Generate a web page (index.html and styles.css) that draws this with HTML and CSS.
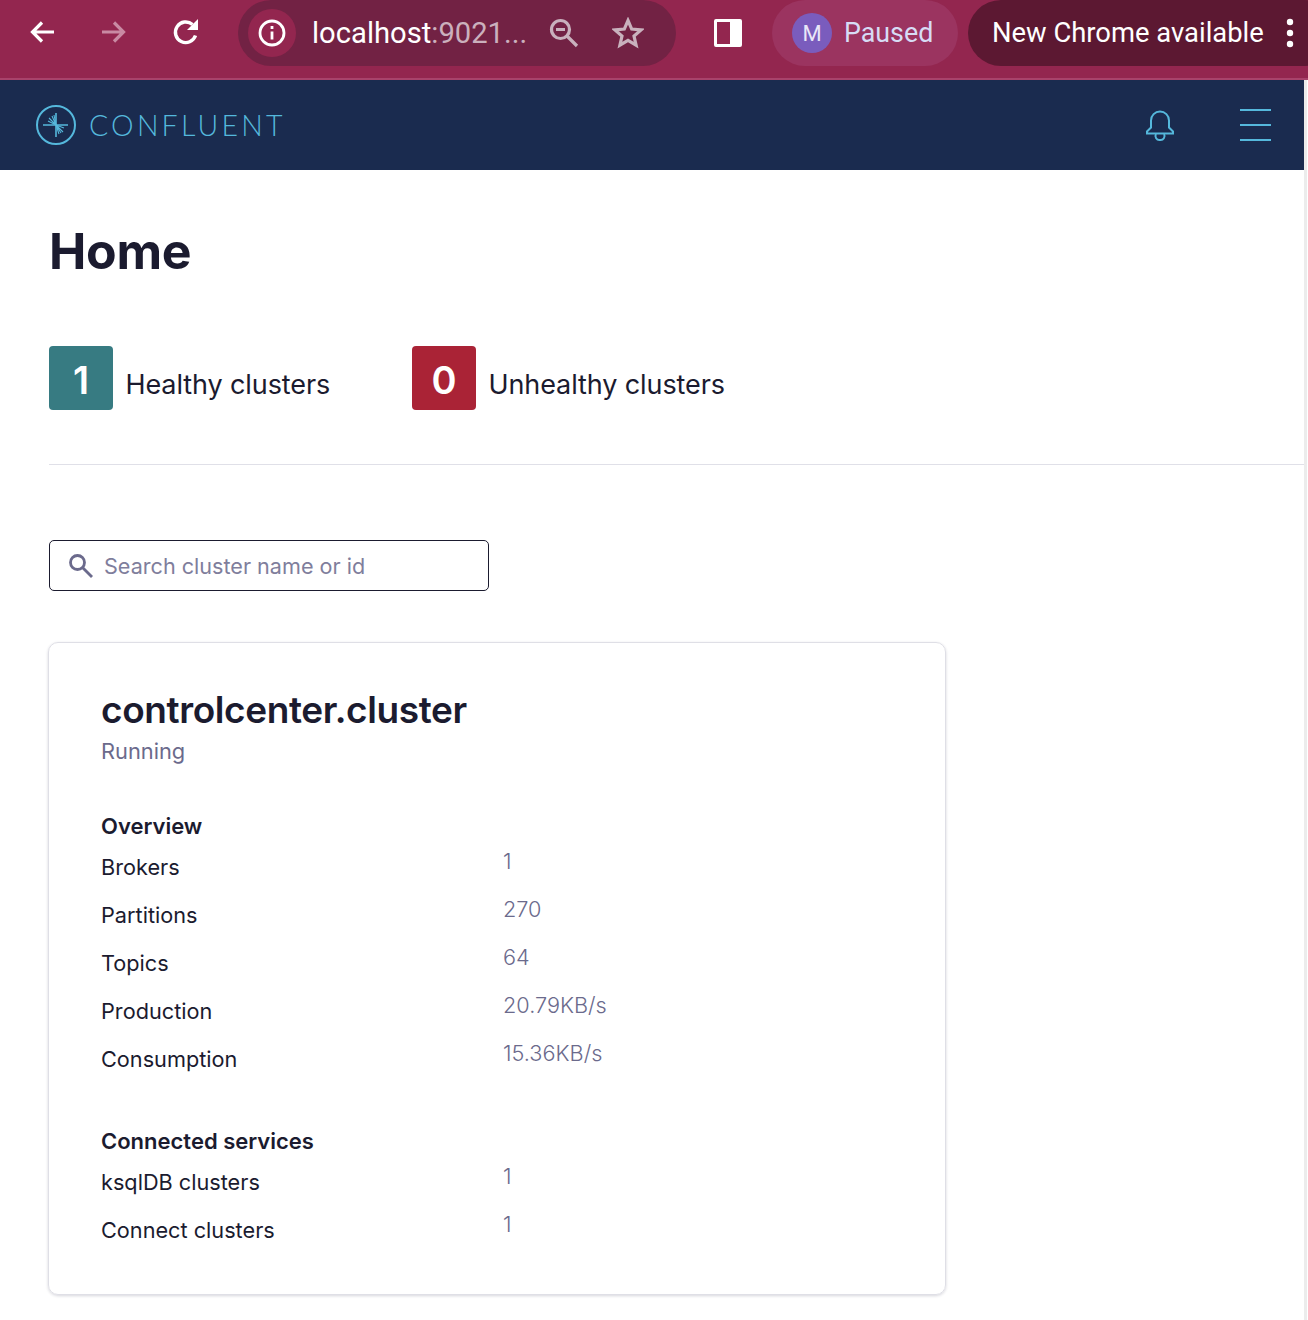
FILE: index.html
```html
<!DOCTYPE html>
<html lang="en">
<head>
    <meta charset="UTF-8">
    <title>Home - Confluent</title>
    <link rel="stylesheet" href="styles.css">
</head>
<body>
    <!-- browser toolbar -->
    <div class="chrome-bar">
        <svg class="chrome-icon icon-back" width="28" height="28" viewBox="0 0 28 28" fill="none" stroke="#fff" stroke-width="3.200"><path d="M26 14H5M14 4.500L4.500 14l9.500 9.500"/></svg>
        <svg class="chrome-icon icon-forward" width="28" height="28" viewBox="0 0 28 28" fill="none" stroke="#c98aa3" stroke-width="3.200"><path d="M2 14h21M14 4.500l9.500 9.500-9.500 9.500"/></svg>
        <svg class="chrome-icon icon-reload" width="28" height="28" viewBox="0 0 28 28" fill="none" stroke="#fff" stroke-width="3.400"><path d="M23.500 17.500A10.300 10.300 0 1 1 20.500 6.500"/><path d="M26 1v11H15z" fill="#fff" stroke="none"/></svg>

        <div class="omnibox">
            <div class="site-info">
                <svg width="28" height="28" viewBox="0 0 28 28" fill="none" stroke="#fff" stroke-width="2.800"><circle cx="14" cy="14" r="12"/><path d="M14 12.500v8"/><path d="M14 7v3"/></svg>
            </div>
            <div class="url"><span class="url-host">localhost</span>:9021...</div>
            <svg class="omni-zoom" width="32" height="32" viewBox="0 0 32 32" fill="none" stroke="#c9b1bd" stroke-width="3.200"><circle cx="12.500" cy="12.500" r="9"/><path d="M19 19l10 10M8 12.500h9"/></svg>
            <svg class="omni-star" width="32" height="32" viewBox="0 0 32 32" fill="none" stroke="#c9b1bd" stroke-width="3.200"><path d="M16 3.500l3.700 8.600 9.300.8-7 6.100 2.100 9.100-8.100-4.800-8.100 4.800 2.100-9.100-7-6.100 9.300-.8z"/></svg>
        </div>

        <svg class="chrome-icon icon-panel" width="30" height="30" viewBox="0 0 30 30"><path fill="#fff" fill-rule="evenodd" d="M3 1h24a2 2 0 0 1 2 2v24a2 2 0 0 1-2 2H3a2 2 0 0 1-2-2V3a2 2 0 0 1 2-2zm1 3v22h13V4z"/></svg>

        <div class="profile-pill">
            <span class="avatar">M</span>
            <span class="profile-label">Paused</span>
        </div>
        <div class="update-pill">
            <span>New Chrome available</span>
            <svg width="8" height="30" viewBox="0 0 8 30" fill="#fff"><circle cx="4" cy="4" r="3.200"/><circle cx="4" cy="15" r="3.200"/><circle cx="4" cy="26" r="3.200"/></svg>
        </div>
    </div>

    <div class="page">
        <header class="app-header">
            <div class="brand">
                <svg class="brand-mark" width="42" height="42" viewBox="0 0 42 42" fill="none" stroke="#55b8dc">
                    <circle cx="21" cy="21" r="19" stroke-width="2"/>
                    <path stroke-width="1.600" d="M8 21h25M21 9v24"/>
                    <path stroke-width="1.100" d="M21 21l-7-7M21 21l-4-9M21 21l-8-4M21 21l-2-10M21 21l7 7M21 21l3 9M21 21l8 3M21 21l5 8"/>
                </svg>
                <span class="brand-name">CONFLUENT</span>
            </div>
            <div class="header-actions">
                <svg class="bell" width="30" height="34" viewBox="0 0 30 34" fill="none" stroke="#55b8dc" stroke-width="2"><path d="M2 24.500v-2l4-4v-7a9 9 0 0 1 18 0v7l4 4v2z"/><path d="M11 25a4 4 0 0 0 4 6 4 4 0 0 0 4-6"/></svg>
                <div class="menu-lines"><span></span><span></span><span></span></div>
            </div>
        </header>

        <main class="content">
            <h1 class="page-title">Home</h1>

            <div class="health-row">
                <div class="health-item healthy">
                    <span class="health-count count-ok">1</span>
                    <span class="health-label">Healthy clusters</span>
                </div>
                <div class="health-item">
                    <span class="health-count count-bad">0</span>
                    <span class="health-label">Unhealthy clusters</span>
                </div>
            </div>

            <div class="search-box">
                <svg width="26" height="26" viewBox="0 0 26 26" fill="none" stroke="#6b6a8c" stroke-width="2.800"><circle cx="9.500" cy="9.500" r="7"/><path d="M14.500 14.500l9.500 9.500"/></svg>
                <span class="search-placeholder">Search cluster name or id</span>
            </div>

            <section class="cluster-card">
                <h2 class="cluster-name">controlcenter.cluster</h2>
                <div class="cluster-status">Running</div>

                <h3 class="group-title">Overview</h3>
                <div class="stat-row"><span class="stat-name">Brokers</span><span class="stat-value">1</span></div>
                <div class="stat-row"><span class="stat-name">Partitions</span><span class="stat-value">270</span></div>
                <div class="stat-row"><span class="stat-name">Topics</span><span class="stat-value">64</span></div>
                <div class="stat-row"><span class="stat-name">Production</span><span class="stat-value">20.79KB/s</span></div>
                <div class="stat-row"><span class="stat-name">Consumption</span><span class="stat-value">15.36KB/s</span></div>

                <h3 class="group-title group-services">Connected services</h3>
                <div class="stat-row"><span class="stat-name">ksqlDB clusters</span><span class="stat-value">1</span></div>
                <div class="stat-row"><span class="stat-name">Connect clusters</span><span class="stat-value">1</span></div>
            </section>
        </main>
    </div>
</body>
</html>
```

FILE: styles.css
```css
/* General layout */
* {
    box-sizing: border-box;
}

body {
    margin: 0;
    font-family: Inter, "Noto Sans", sans-serif;
    color: #1b1b2f;
    background-color: #ffffff;
    overflow: hidden;
    height: 1320px;
}

/* Browser toolbar */
.chrome-bar {
    height: 80px;
    background-color: #93264f;
    border-bottom: 2px solid #a8436b;
    display: flex;
    align-items: flex-start;
    overflow: hidden;
    padding-left: 28px;
}

.chrome-icon {
    flex: none;
    margin-top: 18px;
}

.icon-forward {
    margin-left: 44px;
}

.icon-reload {
    margin-left: 44px;
}

.omnibox {
    flex: none;
    width: 438px;
    height: 66px;
    margin-left: 38px;
    border-radius: 33px;
    background-color: #722244;
    display: flex;
    align-items: center;
    padding-left: 10px;
}

.site-info {
    width: 48px;
    height: 48px;
    border-radius: 50%;
    background-color: #93264f;
    display: flex;
    align-items: center;
    justify-content: center;
}

.url {
    margin-left: 16px;
    width: 236px;
    font-family: Roboto, sans-serif;
    font-size: 29.200px;
    color: #cbb0bd;
    white-space: nowrap;
}

.url-host {
    color: #ffffff;
}

.omni-zoom {
    flex: none;
}

.omni-star {
    flex: none;
    margin-left: 32px;
}

.icon-panel {
    margin-left: 37px;
}

.profile-pill {
    flex: none;
    width: 186px;
    height: 66px;
    margin-left: 29px;
    border-radius: 33px;
    background-color: #9b3460;
    display: flex;
    align-items: center;
    padding-left: 20px;
}

.avatar {
    width: 40px;
    height: 40px;
    border-radius: 50%;
    background-color: #7a5cbd;
    color: #e9e6f8;
    font-family: Roboto, sans-serif;
    font-size: 22px;
    display: flex;
    align-items: center;
    justify-content: center;
}

.profile-label {
    margin-left: 12px;
    font-family: Roboto, sans-serif;
    font-size: 26.800px;
    color: #d7dcf5;
}

.update-pill {
    flex: none;
    width: 370px;
    height: 66px;
    margin-left: 10px;
    border-radius: 33px;
    background-color: #5c1832;
    color: #ffffff;
    font-family: Roboto, sans-serif;
    font-size: 27.400px;
    display: flex;
    align-items: center;
    gap: 22px;
    padding-left: 24px;
}

/* App */
.page {
    width: 1307px;
    height: 1240px;
    border-right: 3px solid #ececec;
}

.app-header {
    height: 90px;
    background-color: #1a2b4f;
    display: flex;
    align-items: center;
    justify-content: space-between;
    padding: 0 33px 0 35px;
}

.brand {
    display: flex;
    align-items: center;
    gap: 13px;
}

.brand-name {
    color: #55b8dc;
    font-family: Lato, sans-serif;
    font-size: 28.500px;
    font-weight: 300;
    letter-spacing: 3.200px;
    line-height: 34px;
    margin-left: -1px;
}

.header-actions {
    display: flex;
    align-items: center;
    gap: 65px;
}

.bell {
    margin-top: 2px;
}

.menu-lines {
    width: 31px;
    display: flex;
    flex-direction: column;
    gap: 13px;
}

.menu-lines span {
    height: 2px;
    background-color: #55b8dc;
}

.content {
    padding: 51px 0 0 49px;
}

.page-title {
    margin: 0;
    font-size: 50px;
    line-height: 60px;
    font-weight: 700;
    letter-spacing: -0.300px;
}

/* Healthy / unhealthy counters */
.health-row {
    display: flex;
    margin-top: 65px;
    padding-bottom: 54px;
    border-bottom: 1px solid #e0e0e8;
}

.health-item {
    display: flex;
    align-items: center;
    gap: 12.500px;
}

.healthy {
    width: 363px;
}

.health-count {
    width: 64px;
    height: 64px;
    padding-top: 4px;
    border-radius: 4px;
    color: #ffffff;
    font-size: 38px;
    font-weight: 600;
    display: flex;
    align-items: center;
    justify-content: center;
}

.count-ok {
    background-color: #377b82;
}

.count-bad {
    background-color: #aa2336;
}

.health-label {
    font-size: 27px;
    letter-spacing: -0.100px;
    margin-top: 12px;
}

/* Search */
.search-box {
    width: 440px;
    height: 51px;
    margin-top: 75px;
    border: 1px solid #1b1b2f;
    border-radius: 5px;
    display: flex;
    align-items: center;
    gap: 10px;
    padding-left: 18px;
}

.search-placeholder {
    font-size: 21.600px;
    color: #7f7e9c;
}

/* Cluster card */
.cluster-card {
    width: 898px;
    height: 653px;
    margin: 51px 0 0 -1px;
    padding: 43px 52px 0;
    border: 1px solid #dfdfe6;
    border-radius: 10px;
    box-shadow: 0 1px 3px rgba(30, 30, 60, 0.18);
}

.cluster-name {
    margin: 0;
    font-size: 37px;
    line-height: 48px;
    font-weight: 600;
    letter-spacing: -0.400px;
}

.cluster-status {
    font-size: 21.800px;
    line-height: 34px;
    color: #6b6a8c;
}

.group-title {
    margin: 44px 0 0;
    font-size: 22px;
    line-height: 28px;
    font-weight: 600;
}

.group-services {
    margin-top: 47px;
}

.stat-row {
    display: flex;
    height: 48px;
    padding-top: 13px;
    font-size: 21.700px;
    line-height: 28px;
}

.stat-name {
    width: 402px;
}

.stat-value {
    color: #6b6a8c;
    font-weight: 300;
    position: relative;
    top: -6px;
}
```
